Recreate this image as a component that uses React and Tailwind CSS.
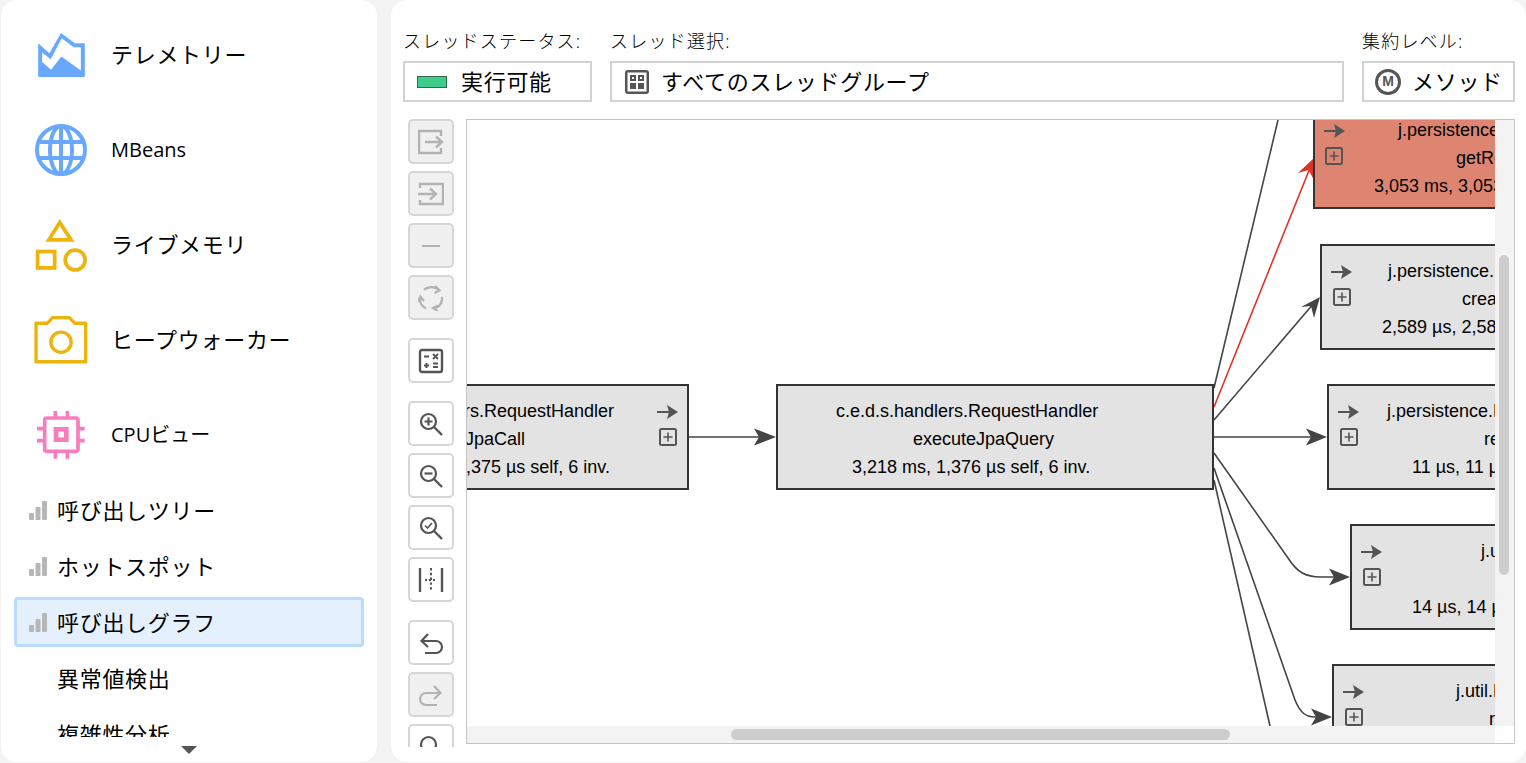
import { ChevronDown } from 'lucide-react';

const uiFont = 'font-["Open_Sans","Noto_Sans_CJK_JP",sans-serif]';

function BarsIcon() {
  return (
    <svg width="18" height="19" viewBox="0 0 18 19" className="shrink-0 fill-[#b7b7b7]">
      <rect x="0" y="12" width="5" height="7" rx="1" />
      <rect x="6.5" y="6" width="5" height="13" rx="1" />
      <rect x="13" y="0" width="5" height="19" rx="1" />
    </svg>
  );
}

function TelemetryIcon() {
  return (
    <svg width="47" height="44" viewBox="111 97 141 133">
      <path
        fillRule="evenodd"
        fill="#68a9ff"
        d="M111 128 L145 158 L180 97 L222 128 H252 V230 H111 Z M123 156 V185 L150 208 L181 168 L240 210 V140 H218 L182 113 L149 176 Z"
      />
    </svg>
  );
}

function GlobeIcon() {
  return (
    <svg width="54" height="54" viewBox="0 0 54 54" fill="none" stroke="#68a9ff" strokeWidth="4">
      <circle cx="27" cy="27" r="24" />
      <ellipse cx="27" cy="27" rx="11" ry="24" />
      <path d="M27 3 V51 M5 19 H49 M5 35 H49" />
    </svg>
  );
}

function ShapesIcon() {
  return (
    <svg width="53" height="54" viewBox="109 655 154 158" fill="none" stroke="#efb30d" strokeWidth="11">
      <path d="M181 668 L214 719 H149 Z" />
      <rect x="116" y="753" width="50" height="48" />
      <circle cx="226" cy="778" r="29" />
    </svg>
  );
}

function CameraIcon() {
  return (
    <svg width="54" height="49" viewBox="102 944 160 144" fill="none" stroke="#efb30d" strokeWidth="10" strokeLinejoin="round">
      <path d="M108 968 H141 L157 951 H207 L223 968 H255 V1082 H108 Z" />
      <circle cx="182" cy="1024" r="30" />
    </svg>
  );
}

function CpuIcon() {
  return (
    <svg width="48" height="48" viewBox="110 29 144 144" fill="none" stroke="#f97dbd" strokeWidth="11">
      <rect x="133" y="50" width="100" height="100" rx="6" />
      <rect x="167" y="84" width="31" height="31" strokeWidth="14" />
      <path d="M165 29 V50 M201 29 V50 M165 150 V172 M201 150 V172 M110 82 H133 M110 118 H133 M233 82 H253 M233 118 H253" />
    </svg>
  );
}

function ThreadGroupIcon() {
  return (
    <svg width="24" height="24" viewBox="0 0 24 24" className="shrink-0">
      <rect x="0" y="0" width="24" height="24" rx="3" fill="#555" />
      <rect x="2.5" y="2.5" width="19" height="19" fill="#fff" />
      <path fill="#555" d="M5 5 H11 V11 H5 Z M13 5 H19 V11 H13 Z M5 13 H11 V19 H5 Z M13 13 H19 V19 H13 Z" />
      <path fill="#fff" d="M7 7 H9 V9 H7 Z M15 7 H17 V9 H15 Z" />
    </svg>
  );
}

function ToolIcon({ children }) {
  return (
    <svg width="26" height="26" viewBox="0 0 26 26" fill="none" stroke="currentColor" strokeWidth="2">
      {children}
    </svg>
  );
}

function ToolButton({ off, className = '', children }) {
  return (
    <div
      className={`flex h-[45px] w-[46px] shrink-0 items-center justify-center rounded-[5px] border-2 ${
        off ? 'border-[#d6d6d6] bg-[#f0f0f0] text-[#b3b3b3]' : 'border-[#d6d6d6] bg-white text-[#555]'
      } ${className}`}
    >
      {children}
    </div>
  );
}

function Magnifier({ children }) {
  return (
    <ToolIcon>
      <circle cx="10.5" cy="10.5" r="7.5" strokeWidth="2.2" />
      <path d="M16 16 L24 24" strokeWidth="2.4" />
      {children}
    </ToolIcon>
  );
}

function Toolbar() {
  return (
    <div className="flex h-[628px] w-[46px] shrink-0 flex-col gap-[7px] overflow-hidden">
      <ToolButton off>
        <ToolIcon>
          <path d="M23 7 V2 H1 V24 H23 V19" strokeWidth="2.4" />
          <path d="M7 13 H24 M18 7.5 L24 13 L18 18.5" strokeWidth="2.4" />
        </ToolIcon>
      </ToolButton>
      <ToolButton off>
        <ToolIcon>
          <path d="M2 7 V3 H25 V23 H2 V19" strokeWidth="2.4" />
          <path d="M0 13 H18 M12 7.5 L18 13 L12 18.5" strokeWidth="2.4" />
        </ToolIcon>
      </ToolButton>
      <ToolButton off>
        <ToolIcon>
          <path d="M4 13 H22" strokeWidth="2.2" />
        </ToolIcon>
      </ToolButton>
      <ToolButton off>
        <ToolIcon>
          <path d="M6 5 A11 11 0 0 1 21 5 M24 12 A11 11 0 0 1 18 23 M8 23.5 A11 11 0 0 1 2 13" strokeWidth="2.2" />
          <path d="M17 1 L21.5 5.5 L16.5 8 M20 20.5 L15 23 L19.5 26 M0 16.5 L2.5 11.5 L6 16" strokeWidth="2.2" />
        </ToolIcon>
      </ToolButton>
      <ToolButton className="mt-[11px]">
        <ToolIcon>
          <rect x="2" y="2" width="22" height="22" rx="2" strokeWidth="2.4" />
          <path d="M6 8.5 H11 M15 6 L20 11 M20 6 L15 11 M6 17.5 H11 M8.5 15 V20 M15 15.5 H20 M15 19 H20" />
        </ToolIcon>
      </ToolButton>
      <ToolButton className="mt-[11px]">
        <Magnifier>
          <path d="M6.5 10.5 H14.5 M10.5 6.5 V14.5" strokeWidth="2.2" />
        </Magnifier>
      </ToolButton>
      <ToolButton>
        <Magnifier>
          <path d="M6.5 10.5 H14.5" strokeWidth="2.2" />
        </Magnifier>
      </ToolButton>
      <ToolButton>
        <Magnifier>
          <path d="M7 10.5 L9.5 13 L14 8" strokeWidth="1.6" />
        </Magnifier>
      </ToolButton>
      <ToolButton>
        <ToolIcon>
          <path d="M2 1 V25 M24 1 V25" strokeWidth="2.4" />
          <path d="M13 1 V25" strokeDasharray="2.4 2.4" />
          <path d="M7 13 H19" strokeDasharray="2 2" />
        </ToolIcon>
      </ToolButton>
      <ToolButton className="mt-[11px]">
        <ToolIcon>
          <path d="M4 11 H18 A6 6 0 0 1 18 23 H7" strokeWidth="2.2" />
          <path d="M10 4 L3.5 11 L10 17" strokeWidth="2.2" />
        </ToolIcon>
      </ToolButton>
      <ToolButton off>
        <ToolIcon>
          <path d="M22 11 H8 A6 6 0 0 0 8 23 H19" strokeWidth="2.2" />
          <path d="M16 4 L22.5 11 L16 17" strokeWidth="2.2" />
        </ToolIcon>
      </ToolButton>
      <ToolButton>
        <Magnifier />
      </ToolButton>
    </div>
  );
}

function NodeArrow({ className }) {
  return (
    <svg width="21" height="14" viewBox="0 0 21 14" className={`absolute ${className}`}>
      <path d="M0 7 H13" stroke="#555" strokeWidth="2" />
      <path d="M10 0 L21 7 L10 14 L12 7 Z" fill="#555" />
    </svg>
  );
}

function NodePlus({ className }) {
  return (
    <svg width="18" height="18" viewBox="0 0 18 18" fill="none" stroke="#555" className={`absolute ${className}`}>
      <rect x="1" y="1" width="16" height="16" rx="1.5" strokeWidth="2" />
      <path d="M4.5 9 H13.5 M9 4.5 V13.5" strokeWidth="1.6" />
    </svg>
  );
}

function NodeLine({ className, children }) {
  return <span className={`absolute h-7 whitespace-nowrap leading-7 ${className}`}>{children}</span>;
}

function NodeBox({ className, children }) {
  return (
    <div
      className={`absolute h-[106px] overflow-hidden border-2 border-[#333] font-["Liberation_Sans",Arial,sans-serif] text-[18px] text-black ${className}`}
    >
      {children}
    </div>
  );
}

function Edges() {
  const head = 'fill-[#444]';
  return (
    <svg
      width="1046"
      height="623"
      viewBox="468 120 1046 623"
      fill="none"
      stroke="#444"
      strokeWidth="1.6"
      className="absolute left-0 top-0"
    >
      <path d="M690 437 H765" />
      <path className={head} stroke="none" d="M777 437 L755 428.5 L760 437 L755 445.5 Z" />
      <path d="M1215 388 L1279 120" />
      <path d="M1215 407 L1313 163" stroke="#dd3322" />
      <path fill="#dd3322" stroke="none" d="M1315 158 L1299 173 L1309.5 170 L1315 180 Z" />
      <path d="M1215 420 L1315 303" />
      <path className={head} stroke="none" d="M1321 297 L1302 307 L1312 306 L1315 318 Z" />
      <path d="M1215 437 H1316" />
      <path className={head} stroke="none" d="M1328 437 L1307 428.5 L1312 437 L1307 445.5 Z" />
      <path d="M1215 453 L1289 558 C1298 572 1306 577 1322 577 H1340" />
      <path className={head} stroke="none" d="M1351 577 L1330 568.5 L1335 577 L1330 585.5 Z" />
      <path d="M1215 468 L1296 700 C1301 712 1306 717 1316 717 H1324" />
      <path className={head} stroke="none" d="M1333 717 L1312 708.5 L1317 717 L1312 725.5 Z" />
      <path d="M1215 480 L1271 726" />
    </svg>
  );
}

function Graph() {
  return (
    <div className="relative h-[625px] min-w-0 flex-1 overflow-hidden border border-[#c4c4c4] bg-white">
      <Edges />

      <NodeBox className="left-[-216px] top-[264px] w-[438px] bg-[#e3e3e3]">
        <NodeLine className="right-[73px] top-[11px]">c.e.d.s.handlers.RequestHandler</NodeLine>
        <NodeLine className="right-[162px] top-[39px]">executeJpaCall</NodeLine>
        <NodeLine className="right-[77px] top-[67px]">3,219 ms, 1,375 µs self, 6 inv.</NodeLine>
        <NodeArrow className="right-[9px] top-[19px]" />
        <NodePlus className="right-[10px] top-[42px]" />
      </NodeBox>

      <NodeBox className="left-[309px] top-[264px] w-[438px] bg-[#e3e3e3]">
        <NodeLine className="left-[58px] top-[11px]">c.e.d.s.handlers.RequestHandler</NodeLine>
        <NodeLine className="left-[135px] top-[39px]">executeJpaQuery</NodeLine>
        <NodeLine className="left-[74px] top-[67px]">3,218 ms, 1,376 µs self, 6 inv.</NodeLine>
      </NodeBox>

      <NodeBox className="left-[846px] top-[-17px] w-[420px] bg-[#de8571]">
        <NodeLine className="left-[83px] top-[11px]">j.persistence.Query</NodeLine>
        <NodeLine className="left-[141px] top-[39px]">getResultList</NodeLine>
        <NodeLine className="left-[59px] top-[67px]">3,053 ms, 3,053 ms self, 1 inv.</NodeLine>
        <NodeArrow className="left-[9px] top-[19px]" />
        <NodePlus className="left-[10px] top-[42px]" />
      </NodeBox>

      <NodeBox className="left-[853px] top-[124px] w-[420px] bg-[#e3e3e3]">
        <NodeLine className="left-[66px] top-[11px]">j.persistence.EntityManager</NodeLine>
        <NodeLine className="left-[140px] top-[39px]">createQuery</NodeLine>
        <NodeLine className="left-[60px] top-[67px]">2,589 µs, 2,589 µs self, 1 inv.</NodeLine>
        <NodeArrow className="left-[9px] top-[19px]" />
        <NodePlus className="left-[11px] top-[42px]" />
      </NodeBox>

      <NodeBox className="left-[860px] top-[264px] w-[420px] bg-[#e3e3e3]">
        <NodeLine className="left-[58px] top-[11px]">j.persistence.EntityManager</NodeLine>
        <NodeLine className="left-[155px] top-[39px]">remove</NodeLine>
        <NodeLine className="left-[83px] top-[67px]">11 µs, 11 µs self, 1 inv.</NodeLine>
        <NodeArrow className="left-[9px] top-[19px]" />
        <NodePlus className="left-[11px] top-[42px]" />
      </NodeBox>

      <NodeBox className="left-[883px] top-[404px] w-[420px] bg-[#e3e3e3]">
        <NodeLine className="left-[129px] top-[11px]">j.util.List</NodeLine>
        <NodeLine className="left-[146px] top-[39px]">size</NodeLine>
        <NodeLine className="left-[60px] top-[67px]">14 µs, 14 µs self, 1 inv.</NodeLine>
        <NodeArrow className="left-[9px] top-[19px]" />
        <NodePlus className="left-[11px] top-[42px]" />
      </NodeBox>

      <NodeBox className="left-[865px] top-[544px] w-[420px] bg-[#e3e3e3]">
        <NodeLine className="left-[122px] top-[11px]">j.util.List</NodeLine>
        <NodeLine className="left-[155px] top-[39px]">remove</NodeLine>
        <NodeArrow className="left-[9px] top-[19px]" />
        <NodePlus className="left-[11px] top-[42px]" />
      </NodeBox>

      {/* scrollbars */}
      <div className="absolute bottom-0 left-0 right-0 h-[17px] bg-[#f3f3f3]">
        <div className="absolute left-[264px] top-[3px] h-[11px] w-[499px] rounded-full bg-[#cdcdcd]" />
      </div>
      <div className="absolute bottom-0 right-0 top-0 w-[19px] bg-[#f3f3f3]">
        <div className="absolute left-[4px] top-[135px] h-[320px] w-[10px] rounded-full bg-[#cdcdcd]" />
        <div className="absolute bottom-0 left-0 h-[17px] w-full bg-white" />
      </div>
    </div>
  );
}

function FeatureRow({ icon, label, small }) {
  return (
    <div className="flex h-[95px] shrink-0 items-center">
      <div className="flex w-[110px] shrink-0 justify-center pl-[10px]">{icon}</div>
      <span className={small ? 'text-[20px]' : 'text-[22px] tracking-[0.7px]'}>{label}</span>
    </div>
  );
}

function TreeRow({ label, bars, selected }) {
  return (
    <div
      className={`mx-[13px] my-[3px] flex h-[50px] shrink-0 items-center gap-[10px] rounded-[4px] border-[3px] pl-[12px] text-[22px] tracking-[0.7px] ${
        selected ? 'border-[#bcdcff] bg-[#e5f0ff]' : 'border-transparent'
      }`}
    >
      <span className="flex w-[18px] shrink-0">{bars && <BarsIcon />}</span>
      <span>{label}</span>
    </div>
  );
}

function Sidebar() {
  return (
    <div className="relative h-[762px] w-[376px] shrink-0 overflow-hidden rounded-2xl bg-white">
      <div className="flex h-[737px] flex-col overflow-hidden pt-[7px]">
        <FeatureRow icon={<TelemetryIcon />} label="テレメトリー" />
        <FeatureRow icon={<GlobeIcon />} label="MBeans" small />
        <FeatureRow icon={<ShapesIcon />} label="ライブメモリ" />
        <FeatureRow icon={<CameraIcon />} label="ヒープウォーカー" />
        <FeatureRow icon={<CpuIcon />} label="CPUビュー" small />
        <TreeRow label="呼び出しツリー" bars />
        <TreeRow label="ホットスポット" bars />
        <TreeRow label="呼び出しグラフ" bars selected />
        <TreeRow label="異常値検出" />
        <TreeRow label="複雑性分析" />
      </div>
      <div className="flex justify-center pl-[0px] pt-[9px]">
        <div className="h-0 w-0 border-x-[8px] border-t-[8px] border-x-transparent border-t-[#555]" />
      </div>
    </div>
  );
}

function Selector({ label, className, children }) {
  return (
    <div className={`flex flex-col ${className}`}>
      <div className="mb-[6px] h-[28px] whitespace-nowrap text-[18px] font-light leading-[28px] tracking-[1.2px]">{label}</div>
      <div className="flex h-[41px] items-center whitespace-nowrap border-2 border-[#d2d2d2] bg-white text-[22px] tracking-[0.7px]">
        {children}
      </div>
    </div>
  );
}

export default function App() {
  return (
    <div className={`flex h-[763px] gap-[14px] overflow-hidden bg-[#f3f3f3] pl-px text-black ${uiFont}`}>
      <Sidebar />
      <div className="flex h-[762px] min-w-0 flex-1 flex-col overflow-hidden rounded-2xl bg-white pl-[12px] pr-[11px] pt-[27px]">
        <div className="flex gap-[18px]">
          <Selector label="スレッドステータス:" className="w-[189px] shrink-0">
            <span className="ml-[12px] mr-[14px] h-[12px] w-[30px] shrink-0 border border-[#2d6b4f] bg-[#3dcc8c]" />
            実行可能
          </Selector>
          <Selector label="スレッド選択:" className="min-w-0 flex-1">
            <span className="ml-[13px] mr-[12px] flex">
              <ThreadGroupIcon />
            </span>
            すべてのスレッドグループ
          </Selector>
          <Selector label="集約レベル:" className="w-[153px] shrink-0">
            <span className="ml-[11px] mr-[11px] flex h-[26px] w-[26px] shrink-0 items-center justify-center rounded-full border-[3px] border-[#555] font-['Liberation_Sans',sans-serif] text-[14px] font-bold tracking-normal text-[#555]">
              M
            </span>
            メソッド
          </Selector>
        </div>
        <div className="mt-[17px] flex items-start gap-[12px] pl-[5px]">
          <Toolbar />
          <Graph />
        </div>
      </div>
    </div>
  );
}
